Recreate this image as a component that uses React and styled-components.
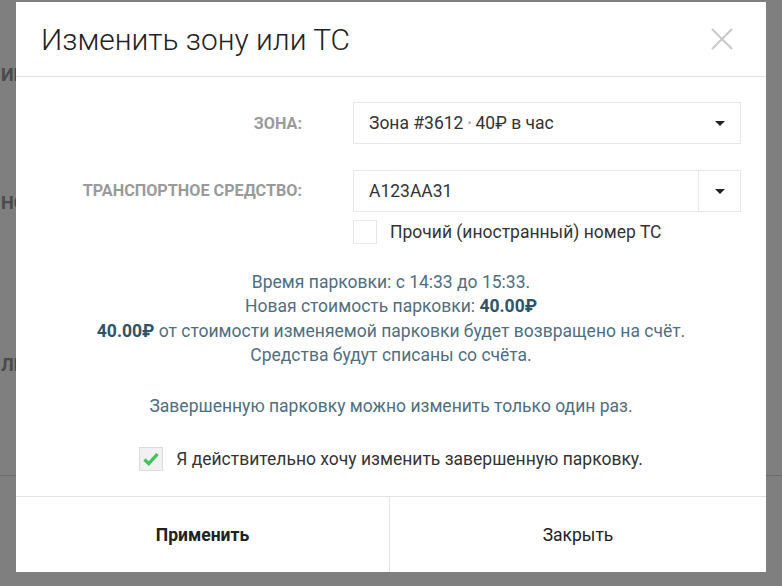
import React, { useState } from "react";
import styled, { createGlobalStyle } from "styled-components";

const GlobalStyle = createGlobalStyle`
  html, body {
    margin: 0;
    padding: 0;
    height: 100%;
  }
  body {
    font-family: Roboto, "Liberation Sans", sans-serif;
    background: #7f7f7f;
    overflow: hidden;
  }
`;

const Backdrop = styled.div`
  position: relative;
  width: 782px;
  height: 586px;
  background: #7f7f7f;
  overflow: hidden;
`;

/* the page under the overlay: only its left edge peeks out */
const PageBehind = styled.div`
  display: flex;
  flex-direction: column;
  padding-top: 64px;
`;

const BehindText = styled.div`
  height: ${props => props.h}px;
  padding-left: 1px;
  font-size: 18px;
  font-weight: bold;
  color: #4a4a4a;
`;

const BehindLine = styled.div`
  height: 1px;
  background: #6c6c6c;
`;

const Modal = styled.div`
  position: absolute;
  left: 16px;
  top: 2px;
  width: 750px;
  height: 570px;
  background: #fff;
  display: flex;
  flex-direction: column;
`;

const Header = styled.div`
  height: 74px;
  display: flex;
  align-items: center;
  justify-content: space-between;
  padding: 0 32px 0 25px;
  border-bottom: 1px solid #e3e3e3;
`;

const Title = styled.h1`
  margin: 0;
  font-size: 29.9px;
  font-weight: 300;
  color: #222;
`;

const CloseButton = styled.button`
  border: none;
  background: none;
  padding: 0;
  width: 24px;
  height: 24px;
  cursor: pointer;
  display: flex;
`;

const Body = styled.div`
  flex: 1;
  display: flex;
  flex-direction: column;
  padding-top: 25px;
`;

const Form = styled.div`
  display: grid;
  grid-template-columns: 261px 388px;
  column-gap: 51px;
  row-gap: 26px;
  padding-left: 25px;
`;

const Label = styled.div`
  text-align: right;
  align-self: ${props => (props.top ? "start" : "center")};
  margin-top: ${props => (props.top ? "11px" : "0")};
  font-size: 16.2px;
  font-weight: bold;
  text-transform: uppercase;
  color: #9a9a9a;
`;

const Field = styled.div`
  display: flex;
  flex-direction: column;
  gap: 8px;
`;

const Select = styled.div`
  height: 42px;
  box-sizing: border-box;
  border: 1px solid #e6e6e6;
  display: flex;
  align-items: center;
  font-size: 17.5px;
  color: #333;
`;

const SelectValue = styled.div`
  flex: 1;
  padding-left: 15px;
`;

const Dot = styled.span`
  color: #aaa;
  font-size: 12px;
  margin: 0 4px;
  vertical-align: 2px;
`;

const CaretCell = styled.div`
  width: ${props => (props.split ? 41 : 40)}px;
  align-self: stretch;
  display: flex;
  align-items: center;
  justify-content: center;
  border-left: ${props => (props.split ? "1px solid #e6e6e6" : "none")};
`;

const Caret = styled.span`
  width: 0;
  height: 0;
  border-left: 5px solid transparent;
  border-right: 5px solid transparent;
  border-top: 5px solid #222;
`;

const CheckRow = styled.label`
  display: flex;
  align-items: center;
  gap: 13px;
  font-size: 17.5px;
  color: #333;
  cursor: pointer;
  justify-content: ${props => (props.center ? "center" : "flex-start")};
`;

const Box = styled.span`
  width: 24px;
  height: 24px;
  flex: none;
  box-sizing: border-box;
  border: 1px solid ${props => (props.checked ? "#dcdcdc" : "#e6e6e6")};
  background: ${props => (props.checked ? "#f1f1f1" : "#fff")};
  display: flex;
  align-items: center;
  justify-content: center;
`;

const Info = styled.div`
  margin-top: 26px;
  text-align: center;
  font-size: 17.5px;
  line-height: 24.4px;
  color: #4f6e7f;
`;

const Strong = styled.b`
  color: #2f5468;
`;

const Note = styled.div`
  margin-top: 28px;
  text-align: center;
  font-size: 17.5px;
  color: #4f6e7f;
`;

const Confirm = styled.div`
  margin-top: 31px;
`;

const Footer = styled.div`
  height: 75px;
  border-top: 1px solid #e3e3e3;
  display: grid;
  grid-template-columns: 374px 1fr;
`;

const FooterButton = styled.button`
  border: none;
  background: #fff;
  font-family: inherit;
  font-size: 17.5px;
  color: #222;
  font-weight: ${props => (props.primary ? "bold" : "normal")};
  border-right: ${props => (props.primary ? "1px solid #e3e3e3" : "none")};
  cursor: pointer;
  padding: 0;
  text-align: center;
`;

const CloseIcon = () => (
  <svg width="24" height="24" viewBox="0 0 24 24">
    <path d="M2 2 L22 22 M22 2 L2 22" stroke="#c8c8c8" strokeWidth="2" />
  </svg>
);

const CheckIcon = () => (
  <svg width="16" height="14" viewBox="0 0 16 14">
    <path d="M1.5 7.5 L5.8 11.6 L14.5 2" stroke="#3fc25e" strokeWidth="3.2" fill="none" />
  </svg>
);

function App() {
  const [foreign, setForeign] = useState(false);
  const [sure, setSure] = useState(true);

  return (
    <>
      <GlobalStyle />
      <Backdrop>
        <PageBehind>
          <BehindText h={128}>ИГ</BehindText>
          <BehindText h={162}>НО</BehindText>
          <BehindText h={121}>ЛИ</BehindText>
          <BehindLine />
        </PageBehind>

        <Modal>
          <Header>
            <Title>Изменить зону или ТС</Title>
            <CloseButton aria-label="close">
              <CloseIcon />
            </CloseButton>
          </Header>

          <Body>
            <Form>
              <Label>Зона:</Label>
              <Select>
                <SelectValue>
                  Зона #3612<Dot>•</Dot>40₽ в час
                </SelectValue>
                <CaretCell>
                  <Caret />
                </CaretCell>
              </Select>

              <Label top>Транспортное средство:</Label>
              <Field>
                <Select>
                  <SelectValue>A123AA31</SelectValue>
                  <CaretCell split>
                    <Caret />
                  </CaretCell>
                </Select>
                <CheckRow onClick={() => setForeign(!foreign)}>
                  <Box checked={foreign}>{foreign && <CheckIcon />}</Box>
                  Прочий (иностранный) номер ТС
                </CheckRow>
              </Field>
            </Form>

            <Info>
              Время парковки: с 14:33 до 15:33.
              <br />
              Новая стоимость парковки: <Strong>40.00₽</Strong>
              <br />
              <Strong>40.00₽</Strong> от стоимости изменяемой парковки будет возвращено на счёт.
              <br />
              Средства будут списаны со счёта.
            </Info>

            <Note>Завершенную парковку можно изменить только один раз.</Note>

            <Confirm>
              <CheckRow center onClick={() => setSure(!sure)}>
                <Box checked={sure}>{sure && <CheckIcon />}</Box>
                Я действительно хочу изменить завершенную парковку.
              </CheckRow>
            </Confirm>
          </Body>

          <Footer>
            <FooterButton primary>Применить</FooterButton>
            <FooterButton>Закрыть</FooterButton>
          </Footer>
        </Modal>
      </Backdrop>
    </>
  );
}

export default App;
